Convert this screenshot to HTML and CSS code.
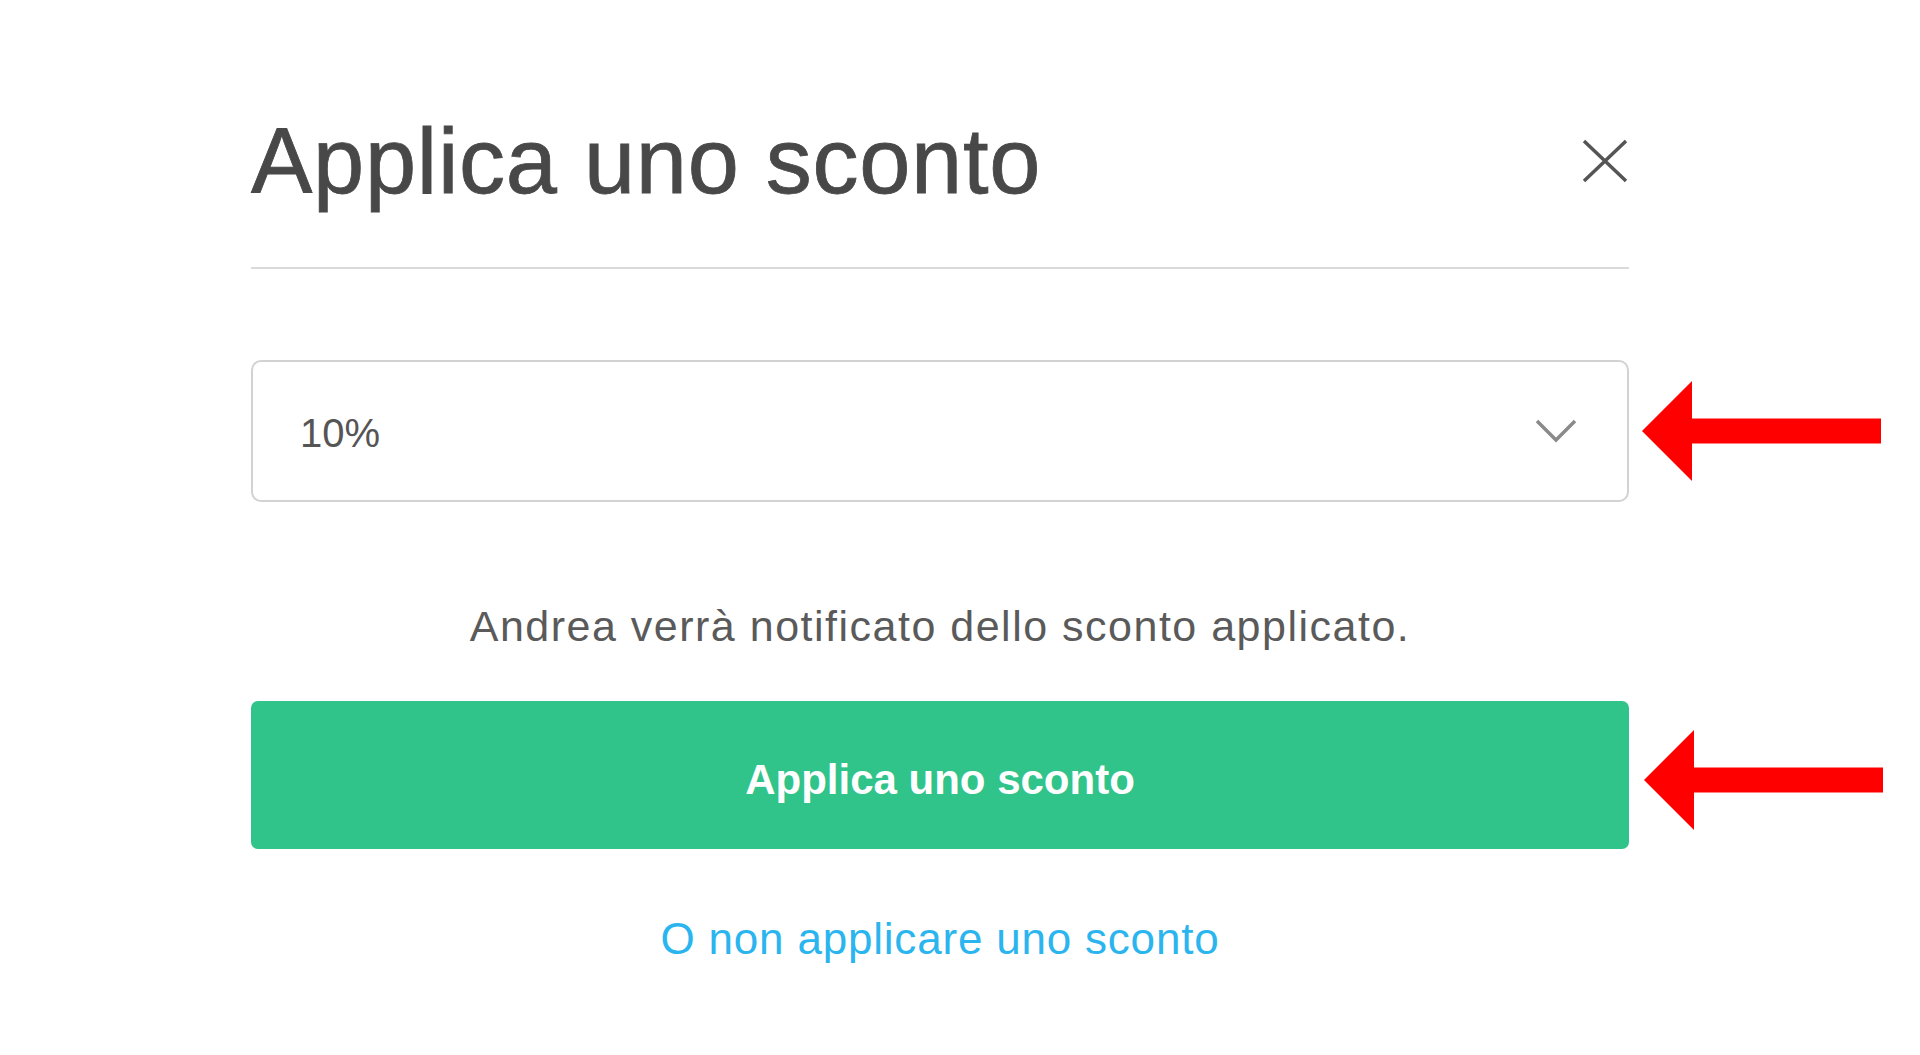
FILE: index.html
```html
<!DOCTYPE html>
<html>
<head>
    <title>Applica uno sconto</title>
    <link rel="stylesheet" href="styles.css">
</head>
<body>
    <div class="modal">
        <div class="modal-header">
            <h1 class="modal-title">Applica uno sconto</h1>
            <button class="close-btn" aria-label="Chiudi">
                <svg width="48" height="44" viewBox="0 0 48 44">
                    <path d="M3 2 L45 42 M45 2 L3 42" stroke="#555" stroke-width="3.5" fill="none"/>
                </svg>
            </button>
        </div>

        <div class="select-box">
            <span class="select-value">10%</span>
            <svg class="chevron" width="42" height="26" viewBox="0 0 42 26">
                <path d="M2 3 L21 22 L40 3" stroke="#8a8a8a" stroke-width="3.5" fill="none"/>
            </svg>
            <svg class="pointer" width="239" height="100" viewBox="0 0 239 100">
                <polygon points="0,50 50,0 50,37.5 239,37.5 239,62.5 50,62.5 50,100" fill="#ff0000"/>
            </svg>
        </div>

        <p class="note">Andrea verrà notificato dello sconto applicato.</p>

        <button class="apply-btn">
            Applica uno sconto
            <svg class="pointer pointer-low" width="239" height="100" viewBox="0 0 239 100">
                <polygon points="0,50 50,0 50,37.5 239,37.5 239,62.5 50,62.5 50,100" fill="#ff0000"/>
            </svg>
        </button>

        <a class="skip-link" href="#">O non applicare uno sconto</a>
    </div>
</body>
</html>
```

FILE: styles.css
```css
body {
    margin: 0;
    background-color: #fff;
    font-family: "Liberation Sans", Arial, sans-serif;
    color: #484848;
}

.modal {
    width: 1378px;
    margin-left: 251px;
    padding-top: 115px;
    display: flex;
    flex-direction: column;
}

.modal-header {
    display: flex;
    justify-content: space-between;
    align-items: center;
    padding-bottom: 60px;
    border-bottom: 2px solid #dadada;
}

.modal-title {
    margin: 0;
    font-size: 92px;
    line-height: 92px;
    font-weight: normal;
    letter-spacing: 0.7px;
    color: #484848;
    -webkit-text-stroke: 0.8px #484848;
}

.close-btn {
    border: none;
    background: none;
    padding: 0;
    width: 48px;
    height: 44px;
    cursor: pointer;
}

.close-btn svg {
    display: block;
}

.select-box {
    position: relative;
    margin-top: 91px;
    height: 138px;
    box-sizing: content-box;
    border: 2px solid #d2d2d2;
    border-radius: 10px;
    display: flex;
    align-items: center;
    justify-content: space-between;
    padding: 0 50px 0 47px;
}

.select-value {
    padding-top: 4px;
    font-size: 40px;
    color: #555;
}

.chevron {
    display: block;
}

.pointer {
    position: absolute;
    left: calc(100% + 15px);
    top: 50%;
    transform: translateY(-50%);
}

.pointer-low {
    top: calc(50% + 5px);
}

.note {
    margin: 99px 0 0;
    text-align: center;
    font-size: 43px;
    line-height: 50px;
    letter-spacing: 1.5px;
    color: #5a5a5a;
}

.apply-btn {
    position: relative;
    margin-top: 50px;
    height: 148px;
    padding-top: 10px;
    border: none;
    border-radius: 7px;
    background-color: #30c48b;
    color: #fff;
    font-family: "Liberation Sans", Arial, sans-serif;
    font-size: 42px;
    font-weight: bold;
    cursor: pointer;
}

.skip-link {
    margin-top: 65px;
    text-align: center;
    font-size: 44px;
    line-height: 50px;
    letter-spacing: 0.8px;
    color: #2bb5ef;
    text-decoration: none;
}
```
